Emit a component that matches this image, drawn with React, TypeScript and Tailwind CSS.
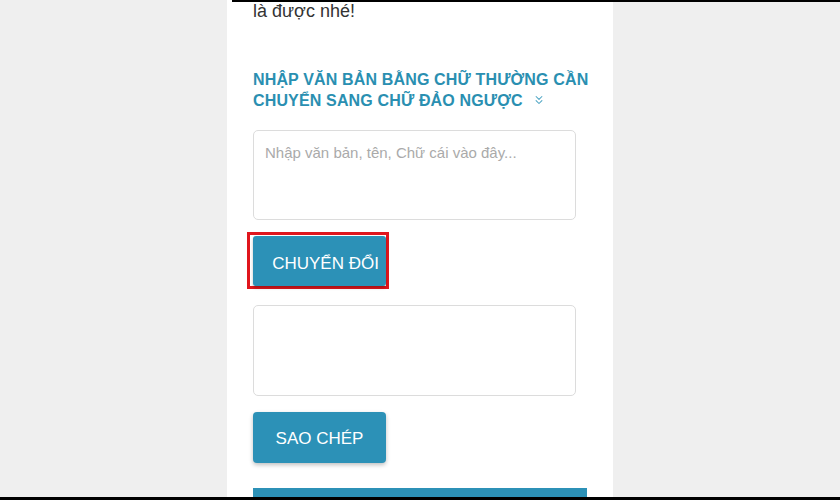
import { ChevronsDown } from 'lucide-react'

const font = { fontFamily: '"Liberation Sans", Arial, sans-serif' }

export default function App() {
  return (
    <div className="relative h-[500px] w-[840px] overflow-hidden bg-[#efefef]" style={font}>
      <div className="absolute left-[232px] right-0 top-0 h-[2px] bg-black" />
      <div className="mx-auto h-full w-[386px] bg-white pl-[26px]">
        <p className="pt-[1px] text-[18px] leading-[20px] text-[#333]">là được nhé!</p>

        <h2 className="mt-[48px] whitespace-nowrap text-[16px] font-bold leading-[21px] tracking-[0.15px] text-[#2a8fb1]">
          NHẬP VĂN BẢN BẰNG CHỮ THƯỜNG CẦN
          <br />
          CHUYỂN SANG CHỮ ĐẢO NGƯỢC
          <ChevronsDown className="ml-[9px] inline-block h-[14px] w-[14px] align-[-1px] text-[#4aa3c2]" strokeWidth={1.75} />
        </h2>

        <textarea
          className="mt-[19px] block h-[90px] w-[323px] resize-none rounded-[5px] border border-[#dcdcdc] px-[11px] py-[12px] text-[15px] leading-[20px] text-[#333] outline-none placeholder:text-[#aaa]"
          placeholder="Nhập văn bản, tên, Chữ cái vào đây..."
        />

        <div className="mt-[12px] ml-[-6px] flex w-fit border-[3px] border-[#e0161d] pl-[3px] pt-[1px]">
          <button className="flex h-[50px] w-[133px] items-center justify-center rounded-[3px] bg-[#2c91b7] pl-[12px] pt-[6px] text-[17px] text-white shadow-[0_2px_3px_rgba(0,0,0,0.25)]">
            CHUYỂN ĐỔI
          </button>
        </div>

        <textarea className="mt-[16px] block h-[91px] w-[323px] resize-none rounded-[5px] border border-[#dcdcdc] outline-none" />

        <button className="mt-[16px] flex h-[51px] w-[133px] items-center justify-center rounded-[4px] bg-[#2c91b7] pt-[2px] text-[17px] text-white shadow-[0_2px_4px_rgba(0,0,0,0.25)]">
          SAO CHÉP
        </button>

        <div className="mt-[25px] h-[12px] w-[334px] bg-[#2c91b7]" />
      </div>
      <div className="absolute bottom-0 left-0 right-0 h-[3px] bg-black" />
    </div>
  )
}
